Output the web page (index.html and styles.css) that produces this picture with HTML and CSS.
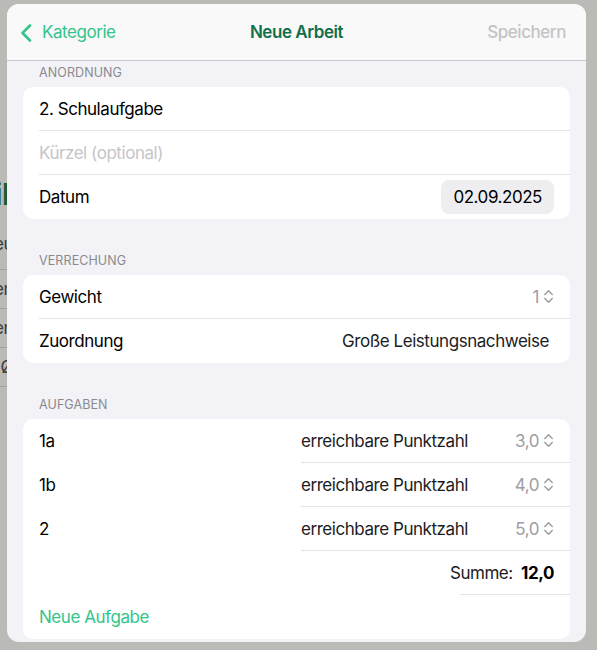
FILE: index.html
```html
<!DOCTYPE html>
<html lang="de">
<head>
  <meta charset="UTF-8" />
  <title>Neue Arbeit</title>
  <link rel="stylesheet" href="styles.css">
</head>
<body>
  <!-- Inhalt hinter dem Sheet (nur links sichtbar) -->
  <div class="behind">
    <div class="behind-inner">
      <div class="behind-title">Mathematik</div>
      <div class="behind-row first">Neu</div>
      <div class="behind-row">Schulaufgaben</div>
      <div class="behind-row">Extemporalien</div>
      <div class="behind-row">Ø</div>
    </div>
  </div>

  <div class="sheet">
    <header class="nav">
      <div class="nav-back">
        <svg width="12" height="18" viewBox="0 0 12 18"><path d="M10 1.5 L2.5 9 L10 16.5" fill="none" stroke="currentColor" stroke-width="2.6" stroke-linecap="round" stroke-linejoin="round"/></svg>
        <span>Kategorie</span>
      </div>
      <div class="nav-title">Neue Arbeit</div>
      <div class="nav-save">Speichern</div>
    </header>

    <main class="form">
      <section class="section first">
        <div class="section-head">ANORDNUNG</div>
        <div class="card">
          <div class="row"><span>2. Schulaufgabe</span></div>
          <div class="row"><span class="placeholder">Kürzel (optional)</span></div>
          <div class="row last">
            <span>Datum</span>
            <span class="date-pill">02.09.2025</span>
          </div>
        </div>
      </section>

      <section class="section">
        <div class="section-head">VERRECHUNG</div>
        <div class="card">
          <div class="row">
            <span>Gewicht</span>
            <span class="stepper">1<svg class="updown" width="11" height="15" viewBox="0 0 11 15"><path d="M1.8 5.5 L5.5 1.8 L9.2 5.5 M1.8 9.5 L5.5 13.2 L9.2 9.5" fill="none" stroke="currentColor" stroke-width="1.5" stroke-linecap="round" stroke-linejoin="round"/></svg></span>
          </div>
          <div class="row last">
            <span>Zuordnung</span>
            <span class="picker">Große Leistungsnachweise</span>
          </div>
        </div>
      </section>

      <section class="section">
        <div class="section-head">AUFGABEN</div>
        <div class="card">
          <div class="task">
            <span class="task-name">1a</span>
            <div class="task-points">
              <span>erreichbare Punktzahl</span>
              <span class="stepper">3,0<svg class="updown" width="11" height="15" viewBox="0 0 11 15"><path d="M1.8 5.5 L5.5 1.8 L9.2 5.5 M1.8 9.5 L5.5 13.2 L9.2 9.5" fill="none" stroke="currentColor" stroke-width="1.5" stroke-linecap="round" stroke-linejoin="round"/></svg></span>
            </div>
          </div>
          <div class="task">
            <span class="task-name">1b</span>
            <div class="task-points">
              <span>erreichbare Punktzahl</span>
              <span class="stepper">4,0<svg class="updown" width="11" height="15" viewBox="0 0 11 15"><path d="M1.8 5.5 L5.5 1.8 L9.2 5.5 M1.8 9.5 L5.5 13.2 L9.2 9.5" fill="none" stroke="currentColor" stroke-width="1.5" stroke-linecap="round" stroke-linejoin="round"/></svg></span>
            </div>
          </div>
          <div class="task">
            <span class="task-name">2</span>
            <div class="task-points">
              <span>erreichbare Punktzahl</span>
              <span class="stepper">5,0<svg class="updown" width="11" height="15" viewBox="0 0 11 15"><path d="M1.8 5.5 L5.5 1.8 L9.2 5.5 M1.8 9.5 L5.5 13.2 L9.2 9.5" fill="none" stroke="currentColor" stroke-width="1.5" stroke-linecap="round" stroke-linejoin="round"/></svg></span>
            </div>
          </div>
          <div class="sum">
            <div class="sum-text">Summe: <strong>12,0</strong></div>
            <div class="sum-rule"></div>
          </div>
          <div class="row last add">Neue Aufgabe</div>
        </div>
      </section>
    </main>
  </div>
</body>
</html>
```

FILE: styles.css
```css
/* Grundlayout */
body {
  margin: 0;
  height: 650px;
  overflow: hidden;
  background: #babbb7;
  font-family: Inter, "Liberation Sans", sans-serif;
  font-size: 17px;
  letter-spacing: -0.45px;
  color: #000;
  position: relative;
}

/* Hintergrund-Ansicht, vom Sheet verdeckt */
.behind {
  position: absolute;
  top: 176px;
  left: 0;
  width: 7px;
  overflow: hidden;
  color: #3a3b39;
}
.behind-inner {
  width: 160px;
  margin-left: -153px;
}
.behind-title {
  height: 36px;
  line-height: 36px;
  font-size: 30px;
  font-weight: 700;
  color: #1b5a3b;
  text-align: right;
  margin-right: -12px;
}
.behind-row {
  height: 38px;
  line-height: 38px;
  border-bottom: 1px solid #a2a3a0;
  text-align: right;
  margin-right: -6px;
  font-size: 17px;
}
.behind-row.first {
  margin-top: 18px;
  height: 39px;
  line-height: 28px;
}

.sheet {
  position: relative;
  z-index: 1;
  margin: 4px 0 0 7px;
  width: 579px;
  height: 638px;
  border-radius: 12px;
  overflow: hidden;
  background: #f2f2f7;
}

/* Navigationsleiste */
.nav {
  height: 56px;
  background: #f9f9f9;
  border-bottom: 1px solid #c9c9cc;
  display: flex;
  align-items: center;
  justify-content: space-between;
  padding: 0 20px 0 13px;
  position: relative;
}
.nav-back {
  display: flex;
  align-items: center;
  gap: 10px;
  color: #34c48b;
}
.nav-back svg {
  margin-top: 1px;
}
.nav-title {
  position: absolute;
  left: 0;
  right: 0;
  text-align: center;
  font-weight: 600;
  color: #126f49;
  pointer-events: none;
}
.nav-save {
  color: #c4c4c7;
  font-weight: 500;
}

/* Formular */
.form {
  padding: 0 16px;
}
.section {
  margin-top: 33px;
}
.section.first {
  margin-top: 3px;
}
.section-head {
  font-size: 12.5px;
  line-height: 18px;
  color: #8a8a8e;
  padding-left: 16px;
  margin-bottom: 5px;
  letter-spacing: 0.1px;
}
.card {
  background: #fff;
  border-radius: 10px;
  overflow: hidden;
}
.row {
  height: 44px;
  display: flex;
  align-items: center;
  justify-content: space-between;
  margin-left: 16px;
  padding-right: 16px;
  border-bottom: 1px solid #e3e3e6;
  box-sizing: border-box;
}
.row.last {
  border-bottom: none;
}
.placeholder {
  color: #c5c5c8;
}
.date-pill {
  background: #eeeef0;
  border-radius: 8px;
  padding: 0 12px;
  height: 34px;
  line-height: 34px;
}
.stepper {
  display: flex;
  align-items: center;
  gap: 4px;
  color: #9d9da2;
}
.updown {
  color: #9d9da2;
}
.picker {
  color: #1c1c1e;
  padding-right: 5px;
}

/* Aufgaben */
.task {
  height: 44px;
  display: flex;
  padding-left: 16px;
}
.task-name {
  width: 262px;
  line-height: 44px;
}
.task-points {
  flex: 1;
  display: flex;
  align-items: center;
  justify-content: space-between;
  padding-right: 16px;
  border-bottom: 1px solid #e3e3e6;
  color: #1c1c1e;
}
.sum {
  height: 44px;
  display: flex;
  flex-direction: column;
  align-items: flex-end;
}
.sum-text {
  height: 43px;
  line-height: 44px;
  padding-right: 16px;
  color: #1c1c1e;
}
.sum-text strong {
  margin-left: 4px;
  color: #000;
  font-weight: 700;
}
.sum-rule {
  width: 110px;
  height: 1px;
  background: #e3e3e6;
}
.add {
  color: #34c48b;
}
```
